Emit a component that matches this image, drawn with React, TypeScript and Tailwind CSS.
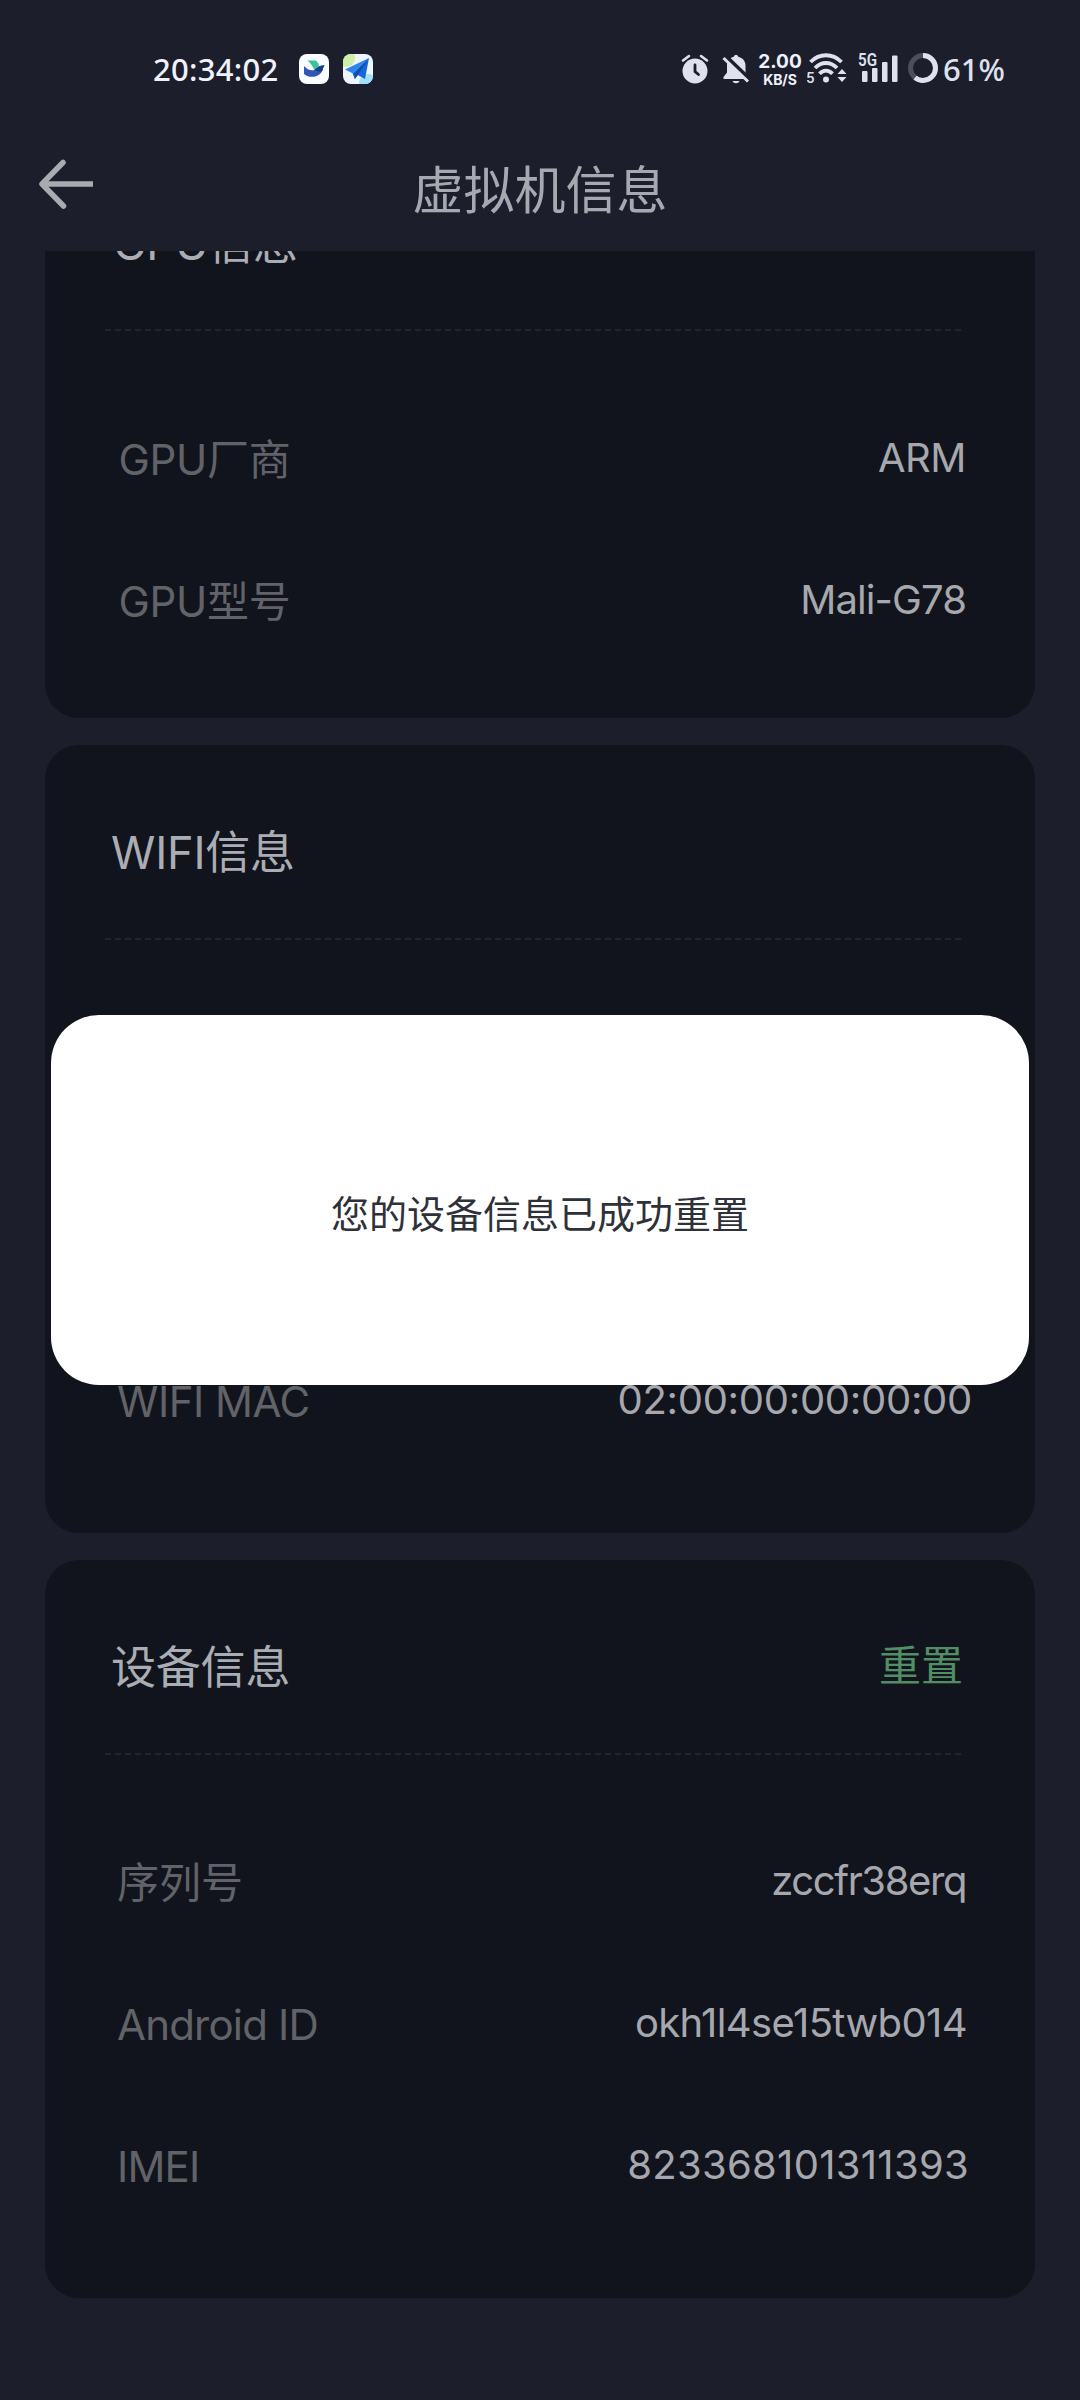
import type { ReactNode } from "react";

interface InfoRow {
  label: string;
  value: string;
  labelClassName?: string;
  valueClassName?: string;
}

interface InfoCardProps {
  title: string;
  rows: InfoRow[];
  action?: string;
  className?: string;
  titleClassName?: string;
  rowsClassName?: string;
}

const gpuRows: InfoRow[] = [
  { label: "GPU厂商", value: "ARM", labelClassName: "pl-[1.5px] tracking-[-0.3px]", valueClassName: "mr-[2px] tracking-[-0.5px]" },
  { label: "GPU型号", value: "Mali-G78", labelClassName: "pl-[1.5px] tracking-[-0.3px]", valueClassName: "mr-[2px] tracking-[-0.9px]" },
];

const wifiRows: InfoRow[] = [
  { label: "WIFI MAC", value: "02:00:00:00:00:00", labelClassName: "tracking-[-0.5px]", valueClassName: "-mr-[4px] tracking-[-0.3px]" },
];

const deviceRows: InfoRow[] = [
  { label: "序列号", value: "zccfr38erq", valueClassName: "mr-[2px] tracking-[-1.4px]" },
  { label: "Android ID", value: "okh1l4se15twb014", labelClassName: "tracking-[-0.8px]", valueClassName: "mr-[1px] tracking-[-0.6px]" },
  { label: "IMEI", value: "823368101311393", labelClassName: "tracking-[-0.8px]", valueClassName: "-mr-[1px] tracking-[0.3px]" },
];

const BirdIcon = () => (
  <svg width="30" height="30" viewBox="0 0 30 30">
    <rect width="30" height="30" rx="8" fill="#fbfdff" />
    <path d="M8.500 6.500h8c2.500 1.500 3.500 3.500 3.400 6l-4.400 3.700C14 13 12 9.500 8.500 6.500z" fill="#36c3a2" />
    <path d="M5 12c3.500 4 8 5.500 11.500 3.400 2.600-2.600 5.500-4.600 9.300-3.800-1.600 1.200-1.600 3-2.600 5.400C20.500 23 11 25 5 20z" fill="#2f56b8" />
    <path d="M15.500 16c3-3.200 6-5.200 10.300-4.400-1.600 1.200-1.600 3-2.600 5.400-2.200 1-5 .8-7.700-1z" fill="#1b3d86" />
  </svg>
);

const PlaneIcon = () => (
  <svg width="30" height="30" viewBox="0 0 30 30">
    <defs>
      <clipPath id="plane-clip">
        <rect width="30" height="30" rx="8" />
      </clipPath>
    </defs>
    <g clipPath="url(#plane-clip)">
      <rect width="30" height="30" fill="#eef6fb" />
      <circle cx="3" cy="4" r="9" fill="#cdeea8" />
      <circle cx="25" cy="29" r="9" fill="#9fe0fa" />
      <path d="M26 4L2 15.500l7.500 3.700z" fill="#2b86ee" />
      <path d="M26 4L9.500 19.200l2.300 5.800 3-4 7.200 4z" fill="#1767d8" />
      <path d="M26 4L11.500 19.500l.3 5.500 3-4z" fill="#0f4cae" />
    </g>
  </svg>
);

const AlarmIcon = () => (
  <svg width="28" height="30" viewBox="0 0 28 30">
    <circle cx="14" cy="17" r="12.500" fill="#dfe1ee" />
    <path d="M2 6.500L8 2M26 6.500L20 2" stroke="#dfe1ee" strokeWidth="2.600" strokeLinecap="round" />
    <path d="M14 11v6.500l3.500 3" fill="none" stroke="#1c1e2c" strokeWidth="2.800" strokeLinecap="round" />
  </svg>
);

const BellOffIcon = () => (
  <svg width="28" height="30" viewBox="0 0 28 30">
    <path
      d="M14 1c1.300 0 2 .7 2.200 1.700 4.300 1 7.300 4.300 7.300 8.700v7.100l3 4.500v2H1.500v-2L5 18.500v-7.100c0-4.400 2.500-7.700 6.800-8.700C12 1.700 12.700 1 14 1zM10.500 27h7c-.6 1.500-1.800 2.200-3.500 2.200s-2.900-.7-3.500-2.200z"
      fill="#dfe1ee"
    />
    <path d="M4 2.500l24 23" stroke="#1c1e2c" strokeWidth="4" />
    <path d="M1.500 4L26 27.500" stroke="#dfe1ee" strokeWidth="3" />
  </svg>
);

const WifiIcon = () => (
  <svg width="40" height="32" viewBox="0 0 40 32">
    <g fill="none" stroke="#dfe1ee" strokeWidth="3.800">
      <path d="M3.500 9c9-9 22-9 31 0" />
      <path d="M8 15c6.500-6.700 15.500-6.700 22 0" />
      <path d="M12.500 20.800c4-4.200 9-4.200 13 0" />
    </g>
    <circle cx="19" cy="26.500" r="3" fill="#dfe1ee" />
    <path d="M30.500 21l4.500-5 4.500 5zM30.500 24l4.500 5 4.500-5z" fill="#dfe1ee" />
    <text x="-1" y="29.500" fontSize="15" fontWeight="500" fill="#dfe1ee" className="font-['Roboto',sans-serif]">5</text>
  </svg>
);

const SignalIcon = () => (
  <svg width="42" height="40" viewBox="0 -4 42 40">
    <text x="0" y="13" fontSize="18" fontWeight="600" fill="#dfe1ee" textLength="19" lengthAdjust="spacingAndGlyphs" className="font-['Roboto',sans-serif]">5G</text>
    <rect x="4" y="18" width="5.500" height="11" rx="1" fill="#dfe1ee" />
    <rect x="14" y="15" width="5.500" height="14" rx="1" fill="#dfe1ee" />
    <rect x="24" y="9" width="5.500" height="20" rx="1" fill="#dfe1ee" />
    <rect x="34" y="2.500" width="5.500" height="26.500" rx="1" fill="#dfe1ee" />
  </svg>
);

const BatteryRing = () => (
  <svg className="-mt-[2px]" width="30" height="30" viewBox="0 0 30 30">
    <circle cx="15" cy="15" r="12.500" fill="none" stroke="#4c4e5b" strokeWidth="5" />
    <circle
      cx="15"
      cy="15"
      r="12.500"
      fill="none"
      stroke="#dfe1ee"
      strokeWidth="5"
      pathLength="100"
      strokeDasharray="61 100"
      transform="rotate(-90 15 15)"
    />
  </svg>
);

const StatusBar = () => (
  <div className="h-[138px] pl-[153px] pr-[73px] flex items-center justify-between text-[#f0f1fa] font-['Noto_Sans',sans-serif]">
    <div className="flex items-center">
      <span className="w-[146px] text-[31px] leading-none font-medium tracking-[0.3px] whitespace-nowrap">20:34:02</span>
      <BirdIcon />
      <span className="w-[14px]" />
      <PlaneIcon />
    </div>
    <div className="flex items-center">
      <AlarmIcon />
      <span className="w-[13px]" />
      <BellOffIcon />
      <div className="ml-[9px] w-[42px] pt-[1px] flex flex-col items-center font-['Inter',sans-serif] font-bold">
        <span className="text-[19px] leading-[20px]">2.00</span>
        <span className="text-[14px] leading-[15px] tracking-[-0.1px]">KB/S</span>
      </div>
      <span className="w-[6px]" />
      <WifiIcon />
      <span className="w-[11px]" />
      <SignalIcon />
      <span className="w-[8px]" />
      <BatteryRing />
      <span className="ml-[5px] w-[64px] text-[31px] leading-none font-medium whitespace-nowrap text-[#dfe1ee]">61%</span>
    </div>
  </div>
);

const Header = () => (
  <div className="h-[113px] pb-[7px] px-[38px] grid grid-cols-[1fr_auto_1fr] items-center">
    <svg className="-mt-[14px]" width="56" height="52" viewBox="0 0 56 52" fill="none" stroke="#a9abaf" strokeWidth="5.500">
      <path d="M25 4.500L4 26l21.500 22" strokeLinecap="round" strokeLinejoin="round" />
      <path d="M4 26h51" />
    </svg>
    <h1 className="text-[51px] leading-[60px] text-[#a7a9b1]">虚拟机信息</h1>
  </div>
);

const InfoCard = ({ title, rows, action, className = "", titleClassName = "", rowsClassName = "" }: InfoCardProps) => (
  <section className={`bg-[#11141c] rounded-[34px] pl-[60px] pr-[74px] ${className}`}>
    <div className="h-[193px] pt-[22px] pl-[6px] flex items-center justify-between leading-[60px]">
      <h2 className={`text-[45px] tracking-[-0.2px] text-[#abadb4] ${titleClassName}`}>{title}</h2>
      {action && <button className="-mr-[2px] mb-[4px] text-[42px] text-[#518e65]">{action}</button>}
    </div>
    <div className="border-t-2 border-dashed border-[#22252d]" />
    <div className={`pl-[12px] -mr-[7px] ${rowsClassName}`}>
      {rows.map((row) => (
        <div key={row.label} className="h-[142px] flex items-center justify-between leading-[60px]">
          <span className={`text-[42px] text-[#616368] ${row.labelClassName ?? ""}`}>{row.label}</span>
          <span className={`mb-1 text-[40px] text-[#a6a8ae] ${row.valueClassName ?? ""}`}>{row.value}</span>
        </div>
      ))}
    </div>
  </section>
);

const Dialog = ({ children }: { children: ReactNode }) => (
  <div className="absolute left-[51px] top-[1015px] w-[978px] h-[370px] rounded-[48px] bg-white pt-[28px] flex items-center justify-center">
    <p className="text-[38px] leading-[48px] text-[#2e3139]">{children}</p>
  </div>
);

const App = () => {
  return (
    <div className="relative w-[1080px] h-[2400px] overflow-hidden flex flex-col bg-[#1c1e2c] font-['Inter','Noto_Sans_CJK_SC',sans-serif]">
      <StatusBar />
      <Header />
      {/* Список прокручен, верх первой карточки уходит под шапку */}
      <main className="flex-1 overflow-hidden px-[45px]">
        <div className="-mt-[115px] flex flex-col gap-[27px]">
          <InfoCard title="GPU信息" rows={gpuRows} className="pb-[45px]" titleClassName="pl-[2px]" rowsClassName="pt-[58px]" />
          <InfoCard title="WIFI信息" rows={wifiRows} className="pb-[60px]" rowsClassName="pt-[391px]" />
          <InfoCard title="设备信息" rows={deviceRows} action="重置" className="pb-[60px]" rowsClassName="pt-[57px]" />
        </div>
      </main>
      <Dialog>您的设备信息已成功重置</Dialog>
    </div>
  );
};

export default App;
